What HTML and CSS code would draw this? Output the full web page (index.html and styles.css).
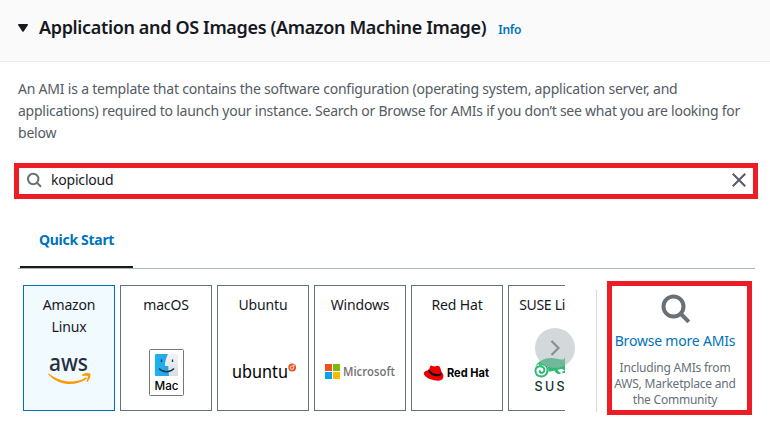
FILE: index.html
```html
<!DOCTYPE html>
<html lang="en">
<head>
<meta charset="utf-8">
<title>Application and OS Images</title>
<link rel="stylesheet" href="styles.css">
</head>
<body>
<header class="header">
  <svg class="caret" width="10" height="8" viewBox="0 0 10 8"><path d="M.6 0h8.8q.9.2.3 1.2L5.7 7.4q-.7.8-1.4 0L.3 1.2Q-.3.2.6 0z" fill="#16191f"/></svg>
  <h2 class="title">Application and OS Images (Amazon Machine Image)</h2>
  <a class="info">Info</a>
</header>
<main class="content">
  <p class="description"><span class="line l1">An AMI is a template that contains the software configuration (operating system, application server, and</span><span class="line l2">applications) required to launch your instance. Search or Browse for AMIs if you don’t see what you are looking for</span><span class="line l3">below</span></p>
  <div class="search">
    <svg width="16" height="16" viewBox="0 0 16 16" fill="none" stroke="#687078" stroke-width="2"><circle cx="6.200" cy="7" r="5.200"/><path d="M10 10.700l4 4"/></svg>
    <span class="query">kopicloud</span>
    <svg class="clear" width="14" height="14" viewBox="0 0 14 14" fill="none" stroke="#545b64" stroke-width="2"><path d="M.8.8l12.400 12.400M13.200.8L.8 13.200"/></svg>
  </div>
  <nav class="tabs"><span class="tab">Quick Start</span></nav>
  <section class="choices">
    <div class="cards">
      <div class="card selected"><span class="name">Amazon<br>Linux</span>
        <svg class="logo" width="92" height="56" viewBox="0 0 92 56">
          <text class="aws" x="26" y="30.500" textLength="39" lengthAdjust="spacingAndGlyphs">aws</text>
          <g transform="translate(0.500 6)"><path d="M25.500 27.500C37 37 52 38 62.500 31.200l1.100 1.400C52 41 35 39.800 25 28.500q-.5-1.300.5-1z" fill="#f90"/><path d="M58.500 29c2.200-2.300 6.500-2.200 8.200-1.400.8 2.400-.4 6.300-2.900 8.500l-1-.4c1-2.200 1.800-4.400 1.500-5.600-1.200-.7-3.800-.3-5.800-.1z" fill="#f90"/></g>
        </svg></div>
      <div class="card"><span class="name">macOS</span>
        <svg class="logo" width="92" height="56" viewBox="0 0 92 56">
          <defs><linearGradient id="face" x1="0" x2="1" y2="0"><stop stop-color="#17b4f5"/><stop offset="1" stop-color="#2f9fe0"/></linearGradient><linearGradient id="side" x2="0" y2="1"><stop stop-color="#f2f4f7"/><stop offset="1" stop-color="#d8dde6"/></linearGradient></defs>
          <g transform="translate(0 1)">
          <rect x="29.500" y="8.500" width="34" height="46" rx="1" fill="#fff" stroke="#777"/>
          <rect x="35" y="13" width="23" height="22" rx="1" fill="url(#side)"/>
          <path d="M36 13h12c-2 4-3 8-3.200 12h3.500c0 4 .2 7 .8 10H36q-1 0-1-1V14q0-1 1-1z" fill="url(#face)"/>
          <path d="M41.500 18.500v2.500M52.500 18.500v2.500M39 27.500c4 4.300 11 4.300 15 0" fill="none" stroke="#17364a" stroke-width="1.300"/>
          <text class="mac" x="34.500" y="49" textLength="24" lengthAdjust="spacingAndGlyphs">Mac</text>
          </g>
        </svg></div>
      <div class="card"><span class="name">Ubuntu</span>
        <svg class="logo" width="92" height="56" viewBox="0 0 92 56">
          <text class="ubuntu" x="15" y="37.500" textLength="56" lengthAdjust="spacingAndGlyphs">ubuntu</text>
          <circle cx="75.200" cy="27.500" r="3.900" fill="#e95420"/><circle cx="75" cy="27.700" r="1.700" fill="none" stroke="#fff" stroke-width=".8"/><circle cx="76.900" cy="25.400" r=".8" fill="#fff"/>
        </svg></div>
      <div class="card"><span class="name">Windows</span>
        <svg class="logo" width="92" height="56" viewBox="0 0 92 56">
          <g transform="translate(1 1)"><path d="M10 23h7v7h-7z" fill="#f25022"/><path d="M18 23h7v7h-7z" fill="#7fba00"/><path d="M10 31h7v7h-7z" fill="#00a4ef"/><path d="M18 31h7v7h-7z" fill="#ffb900"/></g>
          <text class="microsoft" x="29" y="36" textLength="52" lengthAdjust="spacingAndGlyphs">Microsoft</text>
        </svg></div>
      <div class="card"><span class="name">Red Hat</span>
        <svg class="logo" width="92" height="56" viewBox="0 0 92 56">
          <g transform="translate(1.800 1.300) scale(.92 1)">
          <path d="M17.500 29l1.300-3.700q.5-1.300 1.800-.9l2.800.8 3-.8q2.500-.3 3.500 2.400l1.600 4.700q2.700 1.900 1.500 5-1.800 4.200-10 2.500-8-1.500-10.700-5.500-1.800-4 5.200-4.500z" fill="#e00"/><path d="M16.500 29.700q3.500 5.200 10.200 5.300 4.800-.1 4.600-3.300l-.5-1.200q-.5 2.500-4.600 2.300-5.600-.2-8.900-5z" fill="#111"/></g>
          <text class="redhat" x="36" y="36.700" textLength="42" lengthAdjust="spacingAndGlyphs">Red Hat</text>
        </svg></div>
      <div class="card"><span class="name suse-name">SUSE Linux</span>
        <svg class="logo" width="92" height="56" viewBox="0 0 92 56">
          <path d="M27.500 26c3-5 9-8 15.500-8 6 0 9 2.200 13 1.200V18h9v15h-11l.5-1.500 2.500-.7-3-1.800-4.500.7q1.200 2.800 3.500 3l-.8 1.300q-4.200 0-6.200-3.600-2.500 1.400-5.500 1.100z" fill="#30ba78"/>
          <circle cx="33.500" cy="30.500" r="7" fill="#fff"/>
          <path d="M31 24.500q8-1.500 8.600 5.500-.2 6.200-6.200 6.500-5.800-.4-6-5.700.4-4.600 5.100-4.500 4.200.7 3.900 4.200-.9 2.900-3.600 2.300-1.800-1.200-.3-2.400" fill="none" stroke="#30ba78" stroke-width="2"/>
          <text class="suse" x="26.500" y="50.700" textLength="40">SUSE</text>
        </svg></div>
    </div>
    <button class="next" aria-label="Next"><svg width="10" height="16" viewBox="0 0 10 16"><path d="M1.500 1l7 7-7 7" fill="none" stroke="#879091" stroke-width="2.200"/></svg></button>
    <div class="divider"></div>
    <div class="browse">
      <svg width="32" height="32" viewBox="0 0 32 32" fill="none" stroke="#687078" stroke-width="4"><circle cx="14.500" cy="12.500" r="10"/><path d="M21.500 19.500l8.300 8.300"/></svg>
      <a class="more">Browse more AMIs</a>
      <p class="note"><span class="line">Including AMIs from</span><span class="line">AWS, Marketplace and</span><span class="line">the Community</span></p>
    </div>
  </section>
</main>
</body>
</html>
```

FILE: styles.css
```css
* { box-sizing: border-box; }
body { margin: 0; width: 770px; height: 424px; overflow: hidden; background: #fff; color: #16191f; font: 14px/22px "Noto Sans", sans-serif; }
svg { flex: none; display: block; }
.header { display: flex; align-items: center; height: 62px; padding: 0 18px 6px; background: #fafafa; border-bottom: 1px solid #eaeded; }
.caret { margin-right: 11px; }
.title { margin: 0; padding-bottom: 2px; font-size: 18px; font-weight: 600; line-height: 22px; white-space: nowrap; letter-spacing: -0.35px; }
.info { margin: 4px 0 0 12px; color: #0073bb; font-size: 12px; font-weight: 600; letter-spacing: -0.2px; }
.content { padding: 16px 12px 0 14px; }
.description { margin: 0 0 0 4px; height: 85px; color: #545b64; }
.line { display: block; white-space: nowrap; }
.l1 { letter-spacing: -0.21px; }
.l2 { letter-spacing: -0.235px; }
.l3 { letter-spacing: -0.2px; }
.search { display: flex; align-items: center; height: 36px; padding: 0 7px 2px 8px; border: 5px solid #ee1c25; }
.query { margin: 0 0 0 8px; letter-spacing: -0.2px; }
.clear { margin-left: auto; }
.tabs { display: flex; margin: 21px 3px 0 4px; height: 49px; padding-left: 2px; border-bottom: 1px solid #aab7b8; }
.tab { width: 113px; height: 48px; padding: 9px 0 0 19px; border-bottom: 2px solid #16191f; color: #0073bb; font-weight: 700; letter-spacing: -0.3px; white-space: nowrap; }
.choices { display: flex; position: relative; margin: 12px 0 0 9px; }
.cards { display: flex; gap: 5px; width: 542px; height: 135px; padding-top: 4px; overflow: hidden; }
.card { display: flex; flex-direction: column; flex: 0 0 92px; min-width: 0; height: 126px; border: 1px solid #687078; text-align: center; }
.card.selected { border-color: #0073bb; background: #f1faff; }
.name { height: 54px; padding-top: 8px; white-space: nowrap; letter-spacing: -0.15px; }
.suse-name { letter-spacing: -0.3px; }
.logo { margin-left: -1px; }
.next { display: flex; align-items: center; justify-content: center; position: absolute; left: 512px; top: 47px; width: 40px; height: 40px; padding: 0; border: 0; border-radius: 50%; background: rgba(170, 183, 184, .52); }
.divider { width: 1px; height: 122px; margin: 9px 10px 0 31px; background: #d5dbdb; }
.browse { display: flex; flex-direction: column; align-items: center; width: 145px; height: 134px; padding: 8px 9px 0 0; border: 5px solid #ee1c25; }
.more { margin-top: 4px; color: #0073bb; white-space: nowrap; letter-spacing: -0.2px; }
.note { margin: 8px 0 0; color: #687078; font-size: 12px; line-height: 16px; text-align: center; letter-spacing: -0.22px; }
.aws { font: 500 24px "Noto Sans", sans-serif; fill: #252f3e; }
.mac { font: 500 12px Inter, sans-serif; }
.ubuntu { font: 18px "Noto Sans", sans-serif; }
.microsoft { font: 600 12px "Open Sans", sans-serif; fill: #737373; }
.redhat { font: 700 12px Inter, sans-serif; }
.suse { font: 500 12.500px Inter, sans-serif; fill: #0c322c; }
```
